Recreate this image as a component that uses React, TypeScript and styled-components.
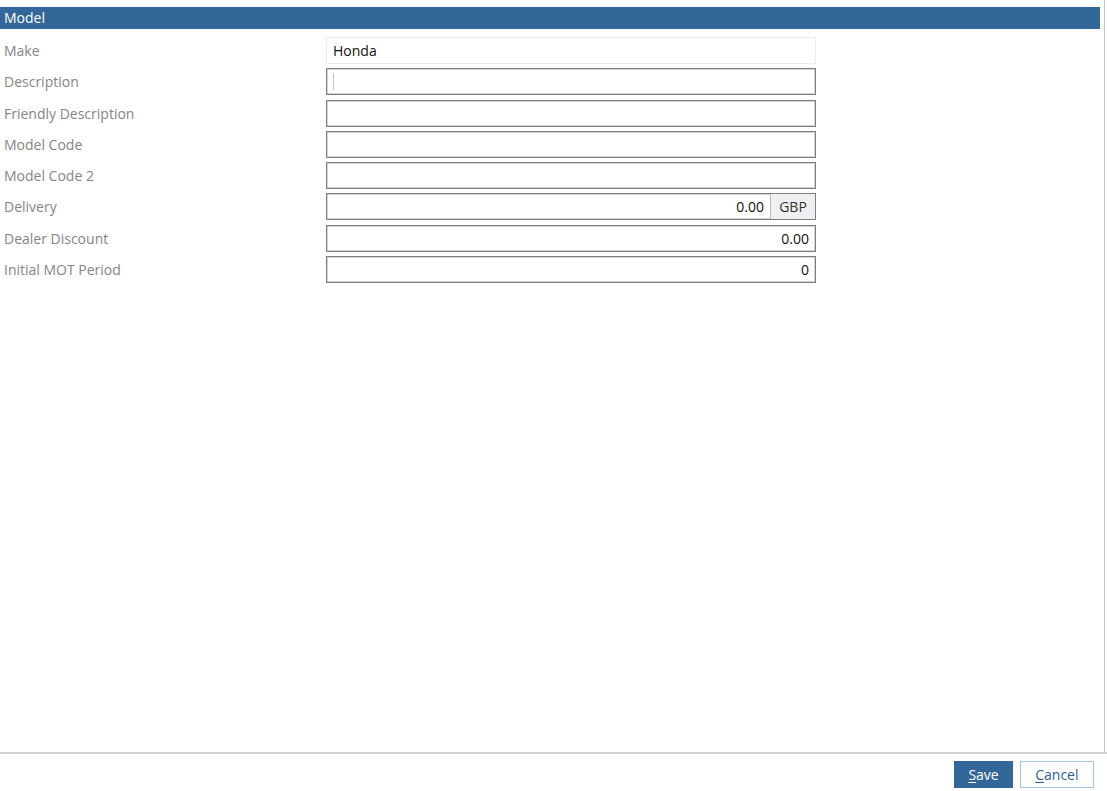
import { Fragment } from 'react'
import styled, { createGlobalStyle } from 'styled-components'

const GlobalStyle = createGlobalStyle`
    html, body {
        margin: 0;
        padding: 0;
        background: #ffffff;
    }
    body {
        font-family: 'Open Sans', 'Noto Sans', 'Liberation Sans', sans-serif;
        font-size: 14px;
    }
`

const Page = styled.div`
    height: 791px;
    display: flex;
    flex-direction: column;
`

const Panel = styled.div`
    flex: 1;
    margin-right: 2px;
    padding: 7px 4px 0 0;
    border-right: 1px solid #c6c6c6;
`

const SectionHeader = styled.div`
    height: 22px;
    line-height: 22px;
    padding-left: 4px;
    background: #336699;
    color: #ffffff;
    font-size: 14px;
`

const Form = styled.div`
    display: grid;
    grid-template-columns: 326px 490px;
    row-gap: 4.3px;
    padding-top: 8px;
`

const Label = styled.div`
    height: 27px;
    line-height: 28px;
    padding-left: 4px;
    color: #858585;
    font-size: 14px;
`

const Field = styled.div<{ $readOnly?: boolean }>`
    box-sizing: border-box;
    height: 27px;
    display: flex;
    align-items: stretch;
    border: 1px solid ${({ $readOnly }) => ($readOnly ? '#ececec' : '#7d7d7d')};
    box-shadow: ${({ $readOnly }) =>
        $readOnly ? 'none' : 'inset 0 0 0 1px #d4d4d4'};
    background: #ffffff;
`

const Value = styled.div<{ $align?: 'left' | 'right' }>`
    flex: 1;
    line-height: 26px;
    padding: 0 6px;
    text-align: ${({ $align }) => $align ?? 'left'};
    color: #111111;
    font-size: 14px;
`

const Caret = styled.span`
    display: inline-block;
    width: 1px;
    height: 17px;
    margin-top: 4px;
    background: #c4c4c4;
`

const Addon = styled.div`
    width: 44px;
    line-height: 26px;
    text-align: center;
    border-left: 1px solid #bdbdbd;
    background: #f0f0f0;
    color: #333333;
    font-size: 14px;
`

const Footer = styled.div`
    height: 39px;
    box-sizing: border-box;
    border-top: 2px solid #d2d2d2;
    display: flex;
    justify-content: flex-end;
    align-items: flex-start;
    gap: 7px;
    padding: 7px 13px 0 0;
`

const Button = styled.button<{ $primary?: boolean }>`
    height: 27px;
    padding: 0 ${({ $primary }) => ($primary ? '13px' : '14.5px')};
    font-family: inherit;
    font-size: 14px;
    border: 1px solid ${({ $primary }) => ($primary ? '#336699' : '#a6c3e2')};
    background: ${({ $primary }) => ($primary ? '#336699' : '#ffffff')};
    color: ${({ $primary }) => ($primary ? '#ffffff' : '#2d5f92')};
    cursor: pointer;
    u {
        text-underline-offset: 2px;
    }
`

type Row = {
    label: string
    value?: string
    align?: 'left' | 'right'
    readOnly?: boolean
    focused?: boolean
    addon?: string
}

const rows: Row[] = [
    { label: 'Make', value: 'Honda', readOnly: true },
    { label: 'Description', focused: true },
    { label: 'Friendly Description' },
    { label: 'Model Code' },
    { label: 'Model Code 2' },
    { label: 'Delivery', value: '0.00', align: 'right', addon: 'GBP' },
    { label: 'Dealer Discount', value: '0.00', align: 'right' },
    { label: 'Initial MOT Period', value: '0', align: 'right' },
]

export default function App() {
    return (
        <>
            <GlobalStyle />
            <Page>
                <Panel>
                    <SectionHeader>Model</SectionHeader>
                    <Form>
                        {rows.map((row) => (
                            <Fragment key={row.label}>
                                <Label>{row.label}</Label>
                                <Field $readOnly={row.readOnly}>
                                    <Value $align={row.align}>
                                        {row.focused ? <Caret /> : row.value}
                                    </Value>
                                    {row.addon && <Addon>{row.addon}</Addon>}
                                </Field>
                            </Fragment>
                        ))}
                    </Form>
                </Panel>
                <Footer>
                    <Button $primary>
                        <u>S</u>ave
                    </Button>
                    <Button>
                        <u>C</u>ancel
                    </Button>
                </Footer>
            </Page>
        </>
    )
}
